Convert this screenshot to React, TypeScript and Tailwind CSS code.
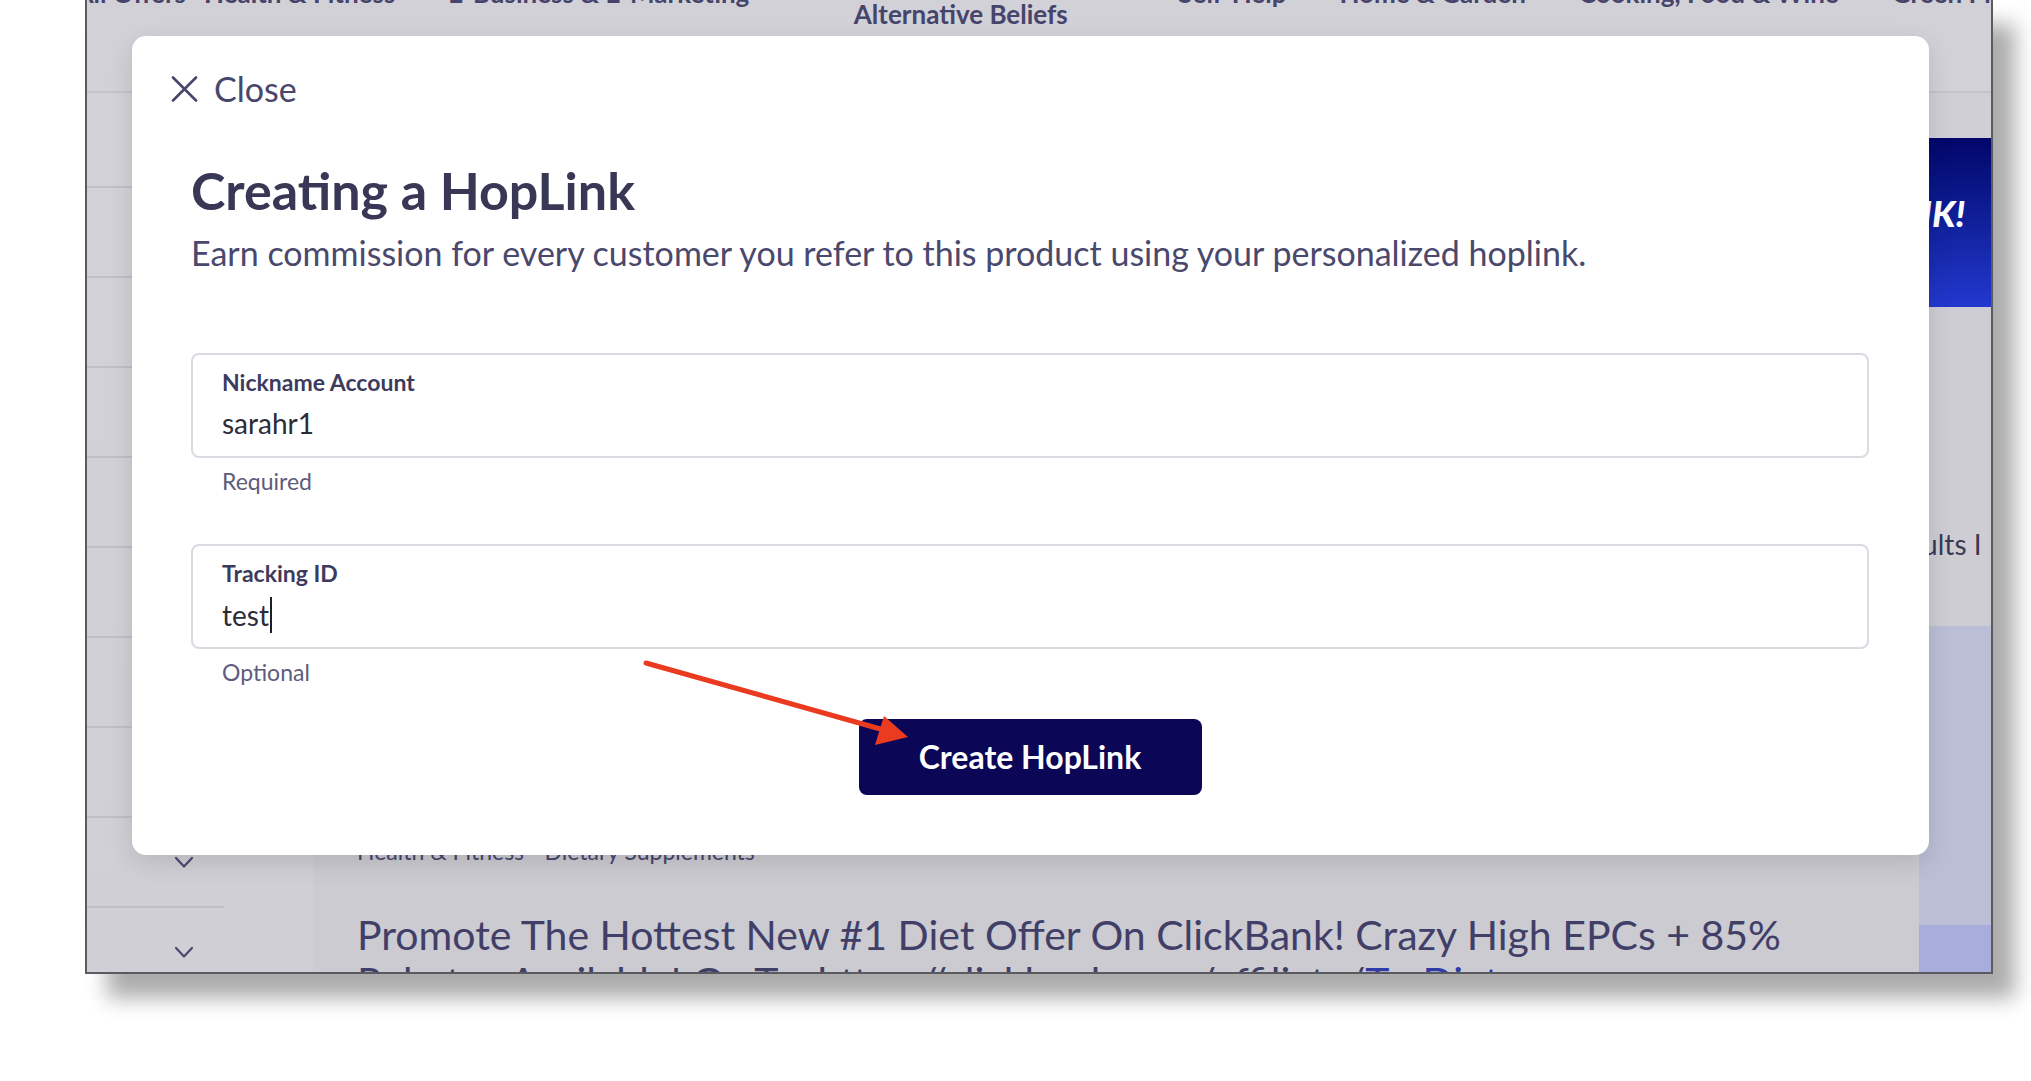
import React from "react";

function Chevron() {
  return (
    <svg width="20" height="13" viewBox="0 0 20 13" fill="none">
      <path d="M2 2 L10 10.5 L18 2" stroke="#4a4870" strokeWidth="2.2" strokeLinecap="round" strokeLinejoin="round" />
    </svg>
  );
}

function Field({ label, value, hint, caret }: { label: string; value: string; hint: string; caret?: boolean }) {
  return (
    <div>
      <div className="h-[105px] border-2 border-[#dadae2] rounded-[8px] pl-[29px] pt-[14px]">
        <div className="text-[23px] leading-[1.2] font-bold text-[#3c3b5e]">{label}</div>
        <div className="mt-[10px] text-[28px] leading-[1.2] text-[#2c2c38] flex items-center">
          <span>{value}</span>
          {caret && <span className="inline-block w-[2px] h-[36px] bg-[#1f1f26] ml-[1px]" />}
        </div>
      </div>
      <div className="mt-[10px] pl-[31px] text-[23px] leading-[1.2] text-[#5d5c7c]">{hint}</div>
    </div>
  );
}

export default function App() {
  const rows = [95, 90, 90, 90, 90, 90, 90, 90, 90, 90];
  return (
    <div className="w-[2031px] h-[1081px] bg-white overflow-hidden relative font-['Lato',sans-serif]">
      {/* screenshot frame */}
      <div className="ml-[85px] w-[1908px] h-[974px] border-x-2 border-b-2 border-[#5a5a60] shadow-[22px_24px_20px_rgba(0,0,0,0.33)] overflow-hidden flex flex-col bg-[#cbcbd1]">
        {/* nav */}
        <div className="h-[93px] shrink-0 bg-[#d1d1d7] border-b-2 border-[#c4c4cb]">
          <div className="-mt-[28px] flex items-start text-[26px] leading-[28px] font-bold text-[#46446b] whitespace-nowrap">
            <div className="w-[99px] flex justify-end overflow-hidden mt-[7px] shrink-0">
              <span>All Offers</span>
            </div>
            <div className="ml-[18px] mt-[7px] shrink-0">Health &amp; Fitness</div>
            <div className="ml-[53px] mt-[7px] shrink-0">E-Business &amp; E-Marketing</div>
            <div className="ml-[47px] w-[329px] text-center shrink-0">
              Spirituality, New Age &amp;
              <br />
              Alternative Beliefs
            </div>
            <div className="ml-[53px] mt-[7px] shrink-0">Self-Help</div>
            <div className="ml-[53px] mt-[7px] shrink-0">Home &amp; Garden</div>
            <div className="ml-[53px] mt-[7px] shrink-0">Cooking, Food &amp; Wine</div>
            <div className="ml-[53px] mt-[7px] shrink-0">Green Products</div>
          </div>
        </div>
        {/* body */}
        <div className="flex flex-1 min-h-0">
          {/* sidebar */}
          <div className="w-[226px] shrink-0 bg-gradient-to-b from-[#d2d2d8] to-[#cfcfd5] flex flex-col">
            {rows.map((h, i) => (
              <div
                key={i}
                className={`${h === 95 ? "h-[95px]" : "h-[90px]"} w-[137px] shrink-0 border-b-2 border-[#bfbfc6] flex items-center justify-end pr-[30px]`}
              >
                <Chevron />
              </div>
            ))}
          </div>
          {/* main */}
          <div className="flex-1 bg-gradient-to-b from-[#c9c9cf] to-[#cbcbd1] flex flex-col pl-[44px] whitespace-nowrap overflow-hidden">
            <div className="mt-[745px] text-[23px] leading-[1.2] text-[#47456c]">Health &amp; Fitness - Dietary Supplements</div>
            <div className="mt-[45px] text-[41px] leading-[47px] text-[#413f68]">
              Promote The Hottest New #1 Diet Offer On ClickBank! Crazy High EPCs + 85%
              <br />
              Rebates Available! Go To: https://clickbank.com/affiliate/<span className="text-[#2f3aa8]">TruDiet</span>
            </div>
          </div>
          {/* right column */}
          <div className="w-[72px] shrink-0 flex flex-col overflow-hidden">
            <div className="h-[45px] shrink-0 bg-[#cfcfd5]" />
            <div className="h-[169px] shrink-0 bg-gradient-to-b from-[#03066a] to-[#2339cf] flex items-center pb-[20px] overflow-hidden">
              <span className="-ml-[13px] text-[36px] font-black italic text-white leading-none">NK!</span>
            </div>
            <div className="h-[319px] shrink-0 bg-[#cdcdd3] overflow-hidden whitespace-nowrap">
              <div className="mt-[221px] -ml-[9px] text-[28px] leading-[1.2] text-[#3b3a55]">sults I</div>
            </div>
            <div className="h-[299px] shrink-0 bg-[#bcbed6]" />
            <div className="flex-1 bg-[#a9addb]" />
          </div>
        </div>
      </div>

      {/* modal */}
      <div className="absolute left-[132px] top-[36px] w-[1797px] h-[819px] bg-white rounded-[14px] shadow-[0_8px_24px_rgba(0,0,0,0.12)] pt-[33px] pl-[39px] pr-[60px]">
        <div className="flex items-center h-[40px] gap-[16px] text-[34px] leading-[1.2] text-[#48476b]">
          <svg width="27" height="26" viewBox="0 0 27 26" fill="none">
            <path d="M2 1.5 L25 24.5 M25 1.5 L2 24.5" stroke="#48476b" strokeWidth="2.6" strokeLinecap="round" />
          </svg>
          <span>Close</span>
        </div>
        <div className="pl-[20px]">
          <div className="mt-[50px] text-[52px] leading-[1.2] font-bold text-[#383755]">Creating a HopLink</div>
          <div className="mt-[12px] text-[34px] leading-[1.2] text-[#4a496d] whitespace-nowrap">
            Earn commission for every customer you refer to this product using your personalized hoplink.
          </div>
          <div className="mt-[79px]">
            <Field label="Nickname Account" value="sarahr1" hint="Required" />
          </div>
          <div className="mt-[48px]">
            <Field label="Tracking ID" value="test" hint="Optional" caret />
          </div>
          <div className="mt-[33px] flex justify-center">
            <button className="w-[343px] h-[76px] bg-[#0b0656] rounded-[8px] text-white text-[32px] font-bold leading-none">
              Create HopLink
            </button>
          </div>
        </div>
      </div>

      {/* red annotation arrow */}
      <svg className="absolute left-0 top-0 pointer-events-none" width="2031" height="1081" viewBox="0 0 2031 1081">
        <line x1="646" y1="663" x2="884" y2="730" stroke="#ea3a1f" strokeWidth="5" strokeLinecap="round" />
        <polygon points="908,737 884,716 875,745" fill="#ea3a1f" />
      </svg>
    </div>
  );
}
